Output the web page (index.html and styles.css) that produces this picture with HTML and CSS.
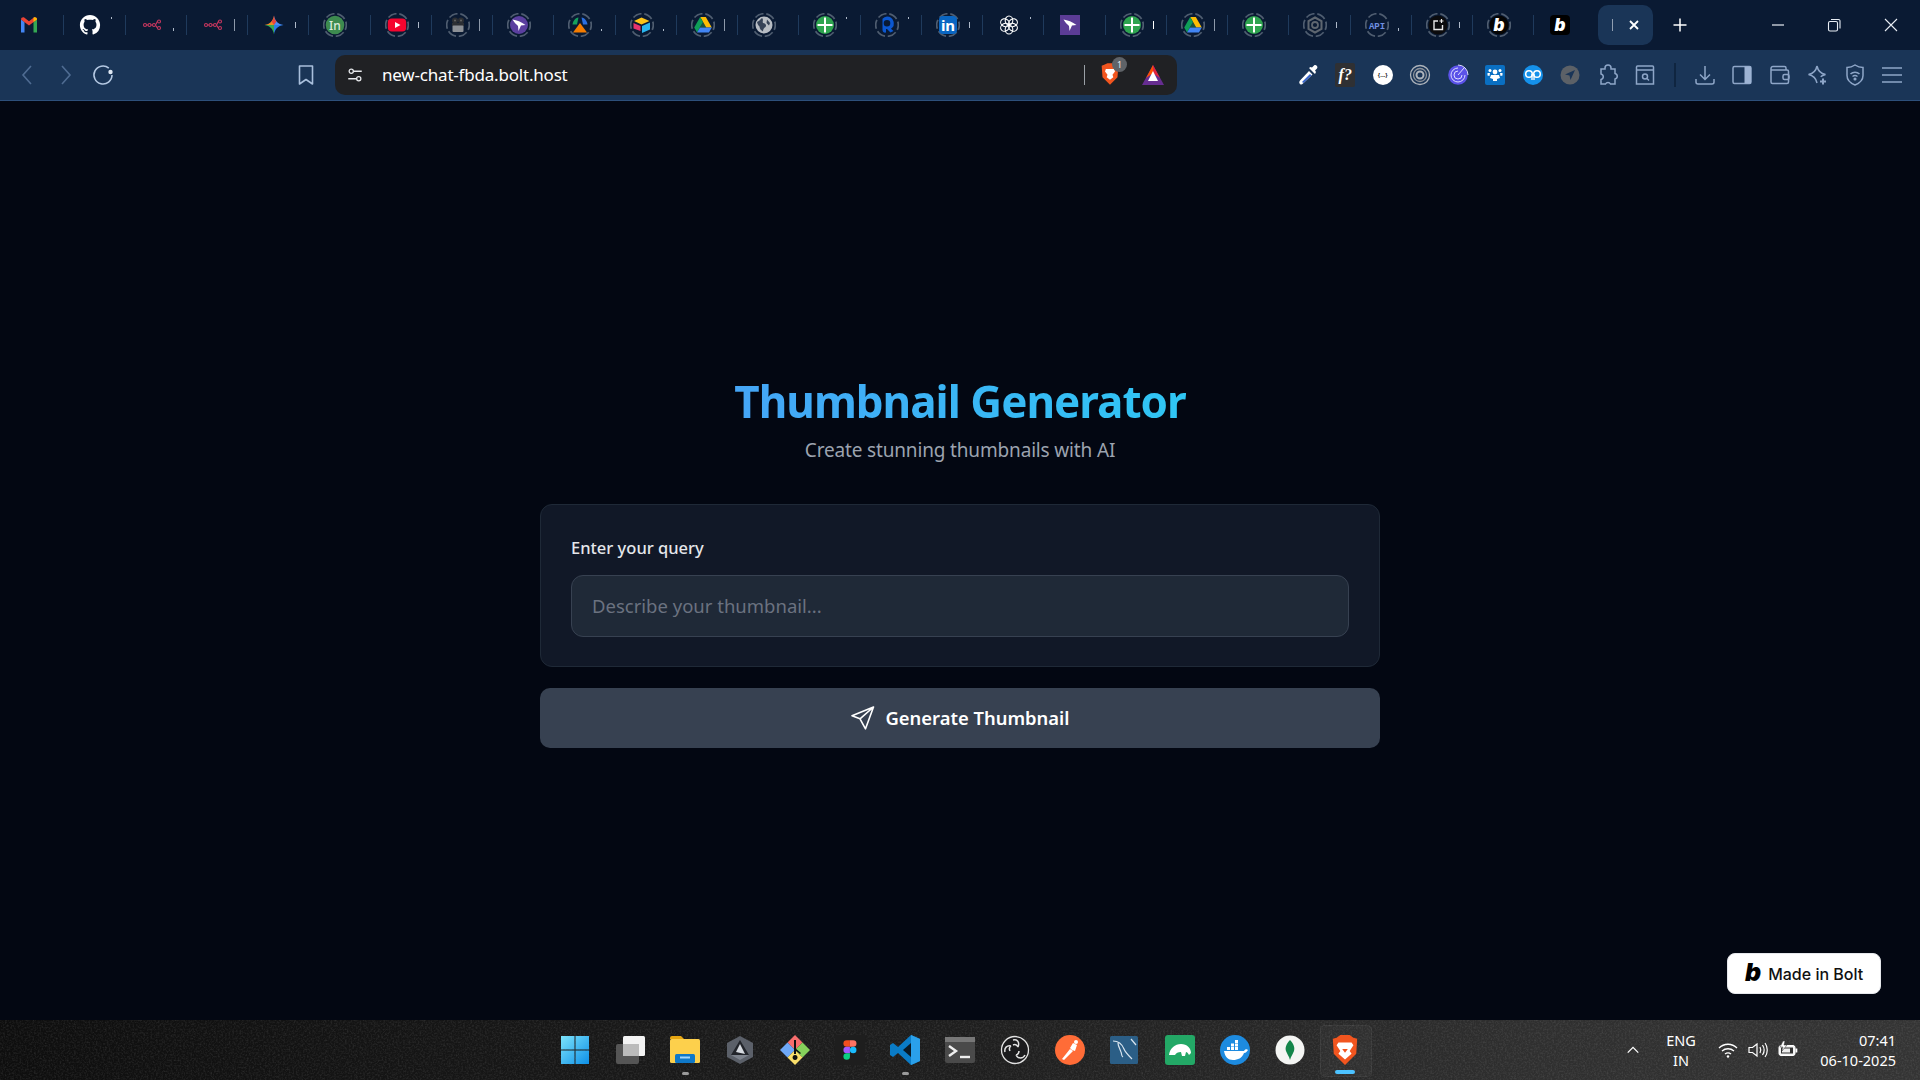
FILE: index.html
```html
<!DOCTYPE html>
<html lang="en">
<head>
<meta charset="utf-8">
<title>Thumbnail Generator</title>
<link rel="stylesheet" href="styles.css">
</head>
<body>
<svg class="sprite" width="0" height="0" aria-hidden="true">
  <defs>
    <symbol id="ring" viewBox="0 0 24 24"><circle cx="12" cy="12" r="11.300" fill="none" stroke="#4f5d70" stroke-width="1.700" stroke-dasharray="9 2.850" stroke-dashoffset="4"/></symbol>
    <symbol id="flow" viewBox="0 0 24 24"><g fill="none" stroke="#c8375f" stroke-width="1.100"><circle cx="5" cy="12" r="1.500"/><circle cx="9.500" cy="12" r="1.500"/><circle cx="14" cy="12" r="1.500"/><circle cx="19" cy="8.500" r="1.500"/><circle cx="19" cy="15" r="1.500"/><path d="M6.500 12H8M11 12h1.500M15.500 11.500c1.500-.3.800-3 2-3M15.500 12.500c1.500.3.800 2.500 2 2.500"/></g></symbol>
    <symbol id="plus" viewBox="0 0 24 24"><circle cx="12" cy="12" r="9" fill="#2ea44f"/><path d="M12 4.500v15M4.500 12h15" stroke="#fff" stroke-width="2"/></symbol>
    <symbol id="drive" viewBox="0 0 24 24"><path d="M9.200 4h5.600l6 10.500h-5.600z" fill="#fbbc04"/><path d="M9.200 4 3.200 14.500 6 19.500 12 9z" fill="#0f9d58"/><path d="M6 19.500h12l2.800-5H9z" fill="#4285f4"/><path d="m9 14.500 3-5.500 3.200 5.500z" fill="#34a853" opacity=".4"/></symbol>
    <symbol id="bird" viewBox="0 0 24 24"><path d="M5.500 6.500c4 .5 9 2.500 13 5.500l-4.500.5-2.500 5.500-.5-5c-2-2-3.700-3.500-5.500-6.500z" fill="#fff"/></symbol>
    <symbol id="boltb" viewBox="0 0 24 24"><text x="12" y="18" text-anchor="middle" class="svg-b">b</text></symbol>
  </defs>
</svg>

<header class="tabstrip">
  <div class="tab first"><svg class="fav" viewBox="0 0 24 24"><path d="M4 19.500V6.500l3.500 2.600v10.400z" fill="#4285f4"/><path d="M16.500 19.500V9.100L20 6.500v13z" fill="#34a853"/><path d="M4 6.500c0-1.900 2.100-2.800 3.500-1.700L12 8.200l4.500-3.400C17.900 3.700 20 4.600 20 6.500l-8 6z" fill="#ea4335"/><path d="M16.500 9.100 20 6.500c0-1.900-2.100-2.800-3.500-1.700z" fill="#fbbc04"/></svg></div>
  <div class="tab"><svg class="fav" viewBox="-1.500 -1.500 19 19"><path fill="#fff" d="M8 0C3.580 0 0 3.580 0 8c0 3.540 2.290 6.530 5.470 7.590.4.070.55-.17.55-.38 0-.19-.01-.82-.01-1.490-2.010.37-2.530-.49-2.690-.94-.09-.23-.48-.94-.82-1.130-.28-.15-.68-.52-.01-.53.63-.01 1.080.58 1.230.82.72 1.210 1.870.87 2.330.66.07-.52.28-.87.51-1.070-1.780-.2-3.640-.89-3.640-3.950 0-.87.31-1.590.82-2.150-.08-.2-.36-1.020.08-2.120 0 0 .67-.21 2.200.82.64-.18 1.320-.27 2-.27.68 0 1.360.09 2 .27 1.530-1.040 2.200-.82 2.200-.82.44 1.100.16 1.920.08 2.120.51.56.82 1.270.82 2.150 0 3.070-1.870 3.750-3.650 3.950.29.25.54.73.54 1.480 0 1.070-.01 1.930-.01 2.200 0 .21.15.46.55.38A8.013 8.013 0 0016 8c0-4.420-3.580-8-8-8z"/></svg><i class="tick top"></i></div>
  <div class="tab"><svg class="fav"><use href="#flow"/></svg><i class="tick low"></i></div>
  <div class="tab"><svg class="fav"><use href="#flow"/></svg><i class="tick long"></i></div>
  <div class="tab"><svg class="fav" viewBox="0 0 24 24"><path d="M12 2.500 C12.800 7.800 16 11.200 21.500 12 H12z" fill="#4a8df6"/><path d="M12 2.500 C11.200 7.800 8 11.200 2.500 12 H12z" fill="#f08a24"/><path d="M2.500 12 C8 12.800 11.200 16.200 12 21.500 V12z" fill="#37a852"/><path d="M21.500 12 C16 12.800 12.800 16.200 12 21.500 V12z" fill="#2b7de9"/><path d="M12 2.500 C11.800 5 11 7 9.500 8.500 L12 12 14.500 8.500 C13 7 12.200 5 12 2.500z" fill="#e8453c"/></svg><i class="tick mid"></i></div>
  <div class="tab"><svg class="fav" viewBox="0 0 24 24"><use href="#ring" width="24" height="24"/><circle cx="12" cy="12" r="9.300" fill="#3d8b4f"/><text x="12" y="16.500" text-anchor="middle" class="svg-in">In</text></svg></div>
  <div class="tab"><svg class="fav" viewBox="0 0 24 24"><use href="#ring" width="24" height="24"/><rect x="2.800" y="5.500" width="18.400" height="13" rx="4" fill="#f5052f"/><path d="m10 9 5.500 3-5.500 3z" fill="#fff"/></svg><i class="tick mid"></i></div>
  <div class="tab"><svg class="fav" viewBox="0 0 24 24"><use href="#ring" width="24" height="24"/><g fill="#2c2f34"><circle cx="9" cy="7.500" r="3"/><circle cx="15" cy="7.500" r="3"/><rect x="6" y="10" width="12" height="3"/></g><rect x="6.500" y="12.500" width="11" height="6.500" rx="1" fill="#8c9096"/><circle cx="9" cy="7.500" r="1" fill="#666"/><circle cx="15" cy="7.500" r="1" fill="#666"/></svg><i class="tick long"></i></div>
  <div class="tab"><svg class="fav" viewBox="0 0 24 24"><use href="#ring" width="24" height="24"/><circle cx="12" cy="12" r="9" fill="#5b3f9f"/><use href="#bird" width="24" height="24"/></svg></div>
  <div class="tab"><svg class="fav" viewBox="0 0 24 24"><use href="#ring" width="24" height="24"/><path d="M10.500 4.500C7 5 5 8 4.500 11.500H9z" fill="#16a05d"/><path d="M13.500 4.500c3.500.5 5.500 3.500 6 7H15z" fill="#2b6fe0"/><path d="M5 19.500 12 10l7 9.500z" fill="#f57c00"/></svg><i class="tick dot-low"></i></div>
  <div class="tab"><svg class="fav" viewBox="0 0 24 24"><use href="#ring" width="24" height="24"/><path d="M11.500 4.500 19.500 8l-8 3.500L4 8z" fill="#fcc419"/><path d="M3.500 10 10.500 13v5l-7-2.500z" fill="#e8336d"/><path d="M12 13l8-3.500v7L12 20z" fill="#29b6f0"/></svg><i class="tick dot-low"></i></div>
  <div class="tab"><svg class="fav" viewBox="0 0 24 24"><use href="#ring" width="24" height="24"/><use href="#drive" width="24" height="24"/></svg><i class="tick long"></i></div>
  <div class="tab"><svg class="fav" viewBox="0 0 24 24"><use href="#ring" width="24" height="24"/><circle cx="12" cy="12" r="8.500" fill="#b8bdc4"/><path d="M5 9c2-1 3-2 5-4 2 2 0 3 1 5 2 0 4 2 2.500 4-1.500 1-2.500 2-2.500 4.500-2-1-3.500-3-3.500-5-1-1-2-2.500-2.500-4.500zM15 6.500l3 3.500-1 2.500-2.500-2.500z" fill="#0a1a33" opacity=".75"/></svg></div>
  <div class="tab"><svg class="fav" viewBox="0 0 24 24"><use href="#ring" width="24" height="24"/><use href="#plus" width="24" height="24"/></svg><i class="tick top"></i></div>
  <div class="tab"><svg class="fav" viewBox="0 0 24 24"><use href="#ring" width="24" height="24"/><path d="M12 3.500a6.800 6.800 0 0 1 4 12.300l2.500 2.200-3 1.500-3.500-3.500h-1v3.500c-1.700.500-3.500-.5-3.500-2.500V5.800A7 7 0 0 1 12 3.500zm0 3.500a3.300 3.300 0 1 0 0 6.600A3.300 3.300 0 0 0 12 7z" fill="#0b57d0" fill-rule="evenodd"/></svg><i class="tick top"></i></div>
  <div class="tab"><svg class="fav" viewBox="0 0 24 24"><use href="#ring" width="24" height="24"/><rect x="3" y="3" width="18" height="18" rx="4" fill="#0a66c2"/><text x="12" y="17.500" text-anchor="middle" class="svg-li">in</text></svg><i class="tick mid"></i></div>
  <div class="tab"><svg class="fav" viewBox="0 0 24 24" fill="none" stroke="#fff" stroke-width="1.100"><ellipse cx="12" cy="7.500" rx="3.800" ry="4.500"/><ellipse cx="16" cy="9.800" rx="4.500" ry="3.800" transform="rotate(-30 16 9.800)"/><ellipse cx="16" cy="14.300" rx="4.500" ry="3.800" transform="rotate(30 16 14.300)"/><ellipse cx="12" cy="16.500" rx="3.800" ry="4.500"/><ellipse cx="8" cy="14.300" rx="4.500" ry="3.800" transform="rotate(-30 8 14.300)"/><ellipse cx="8" cy="9.800" rx="4.500" ry="3.800" transform="rotate(30 8 9.800)"/></svg><i class="tick top"></i></div>
  <div class="tab"><svg class="fav" viewBox="0 0 24 24"><rect x="2" y="2" width="20" height="20" fill="#5b3c96"/><use href="#bird" width="24" height="24"/></svg></div>
  <div class="tab"><svg class="fav" viewBox="0 0 24 24"><use href="#ring" width="24" height="24"/><use href="#plus" width="24" height="24"/></svg><i class="tick long bright"></i></div>
  <div class="tab"><svg class="fav" viewBox="0 0 24 24"><use href="#ring" width="24" height="24"/><use href="#drive" width="24" height="24"/></svg><i class="tick long"></i></div>
  <div class="tab"><svg class="fav" viewBox="0 0 24 24"><use href="#ring" width="24" height="24"/><use href="#plus" width="24" height="24"/></svg></div>
  <div class="tab"><svg class="fav" viewBox="0 0 24 24"><use href="#ring" width="24" height="24"/><path d="M12 4.500 18.500 8v8L12 19.500 5.500 16V8z" fill="none" stroke="#5e6670" stroke-width="2"/><circle cx="12" cy="12" r="3" fill="none" stroke="#5e6670" stroke-width="1.800"/></svg><i class="tick mid"></i></div>
  <div class="tab"><svg class="fav" viewBox="0 0 24 24"><use href="#ring" width="24" height="24"/><text x="12" y="15.500" text-anchor="middle" class="svg-api">API</text></svg><i class="tick low"></i></div>
  <div class="tab"><svg class="fav" viewBox="0 0 24 24"><use href="#ring" width="24" height="24"/><circle cx="12" cy="12" r="9.500" fill="#0b0b0d"/><path d="M12 8H8v8.500h8.500V12" fill="none" stroke="#e8e8e8" stroke-width="1.400"/><path d="M15.500 6v4M13.500 8h4" stroke="#e8e8e8" stroke-width="1.200"/></svg><i class="tick mid"></i></div>
  <div class="tab"><svg class="fav" viewBox="0 0 24 24"><use href="#ring" width="24" height="24"/><circle cx="12" cy="12" r="9.500" fill="#050505"/><use href="#boltb" width="24" height="24"/></svg></div>
  <div class="tab"><svg class="fav" viewBox="0 0 24 24"><rect x="2" y="2" width="20" height="20" rx="4" fill="#000"/><use href="#boltb" width="24" height="24"/></svg></div>
  <div class="tab-active">
    <i class="tick long"></i>
    <svg class="tab-x" viewBox="0 0 12 12"><path d="m2 2 8 8M10 2l-8 8" stroke="#fff" stroke-width="1.800"/></svg>
  </div>
  <svg class="new-tab" viewBox="0 0 16 16"><path d="M8 1.500v13M1.500 8h13" stroke="#fff" stroke-width="1.500"/></svg>
  <div class="win-controls">
    <div class="win-btn"><svg viewBox="0 0 16 16"><path d="M2 8h12" stroke="#e8edf4" stroke-width="1.200"/></svg></div>
    <div class="win-btn"><svg viewBox="0 0 16 16" fill="none" stroke="#e8edf4" stroke-width="1.100"><rect x="2.500" y="4.500" width="9" height="9.500" rx="1.500"/><path d="M5 2.500h7.500a1.500 1.500 0 0 1 1.500 1.500v7.500"/></svg></div>
    <div class="win-btn wide"><svg viewBox="0 0 16 16"><path d="m2 2 12 12M14 2 2 14" stroke="#e8edf4" stroke-width="1.100"/></svg></div>
  </div>
</header>

<nav class="toolbar">
  <div class="tool"><svg viewBox="0 0 24 24" fill="none" stroke="#4f6c92" stroke-width="1.600"><path d="m15 3-8 9 8 9"/></svg></div>
  <div class="tool"><svg viewBox="0 0 24 24" fill="none" stroke="#4f6c92" stroke-width="1.600"><path d="m9 3 8 9-8 9"/></svg></div>
  <div class="tool"><svg viewBox="0 0 24 24" fill="none" stroke="#b4c8e2" stroke-width="1.600"><path d="M21 12a9 9 0 1 1-3.200-6.900"/><circle cx="19.500" cy="9" r="2.200" fill="#dfe8f3" stroke="none"/></svg></div>
  <div class="tool bookmark"><svg viewBox="0 0 24 24" fill="none" stroke="#a9bfdc" stroke-width="1.600" stroke-linejoin="round"><path d="M5.500 3h13v18L12 16.500 5.500 21z"/></svg></div>
  <div class="address">
    <svg class="addr-tune" viewBox="0 0 24 24" fill="none" stroke="#e8eaed" stroke-width="1.700"><circle cx="7" cy="7" r="2.800"/><path d="M10 7h11M3 17h11"/><circle cx="17" cy="17" r="2.800"/></svg>
    <span class="url">new-chat-fbda.bolt.host</span>
    <i class="addr-sep"></i>
    <div class="shield">
      <svg viewBox="0 0 24 28"><path d="M5 3 9 1h6l4 2 3 1-1 14-9 9-9-9L2 4z" fill="#f1551f"/><path d="M7 8h10l1 3-3 4 1 3-4 3-4-3 1-3-3-4z" fill="#fff"/></svg>
      <span class="shield-badge">1</span>
    </div>
    <svg class="bat" viewBox="0 0 24 24"><path d="M12 2 1 22h22z" fill="#662d91"/><path d="M12 2 5 15l7-5z" fill="#ff5000"/><path d="m12 2 7 13-7-5z" fill="#e3243b"/><path d="m12 8 5 10H7z" fill="#fff"/></svg>
  </div>
  <div class="tool ext-first"><svg viewBox="0 0 24 24"><path d="M4 21c-1-1-1-2 0-3.500L13 8l3.500 3.500L7 20.500C6 21.500 5 22 4 21z" fill="#fff"/><path d="M6 19l8-8 1.500 1.500-8 7.500z" fill="#3563c9"/><path d="m13 5 6 6 1-2-1-1.500 2-2c.8-1 .3-2-.3-2.700s-1.700-1-2.700-.3l-2 2L14.500 4z" fill="#fff"/></svg></div>
  <div class="tool"><span class="fq">f?</span></div>
  <div class="tool"><span class="jsonb">{...}</span></div>
  <div class="tool"><svg viewBox="0 0 24 24" fill="none" stroke="#aeb4bb" stroke-width="1.300"><circle cx="12" cy="12" r="9.500"/><circle cx="12" cy="12" r="6.500" stroke="#8d939b"/><circle cx="12" cy="12" r="3.500" stroke-width="2"/></svg></div>
  <div class="tool"><svg viewBox="0 0 24 24"><circle cx="12" cy="12" r="9.800" fill="#5b52e8"/><g fill="none" stroke="#dcdcff" stroke-width="1"><path d="M12 5a7 7 0 1 0 7 7M12 8a4 4 0 1 0 4 4M12 2a10 10 0 0 1 10 10"/><path d="m12 12 6-7"/></g></svg></div>
  <div class="tool"><svg viewBox="0 0 24 24"><rect x="2" y="2" width="20" height="20" rx="2" fill="#0a6fc2"/><g fill="#fff"><circle cx="12" cy="9" r="2.400"/><circle cx="7" cy="7.500" r="1.500"/><circle cx="17" cy="7.500" r="1.500"/><path d="M8 12h8l1 3-3 1v2h-4v-2l-3-1zM4.500 10H7l-.5 3-2-.5zM17 10h2.500v2.500l-2 .5z"/></g></svg></div>
  <div class="tool"><svg viewBox="0 0 24 24"><circle cx="12" cy="12" r="10" fill="#1591ea"/><circle cx="8" cy="11" r="3.300" fill="none" stroke="#fff" stroke-width="1.500"/><circle cx="16" cy="11" r="3.300" fill="none" stroke="#fff" stroke-width="1.500"/><path d="M11 11v6M13 11v6" stroke="#fff" stroke-width="1.300"/></svg></div>
  <div class="tool"><svg viewBox="0 0 24 24"><circle cx="12" cy="12" r="9.500" fill="#5c6167"/><path d="m17 7-10 4.500 4.500 1 1 4.500z" fill="#1a3557"/></svg></div>
  <div class="tool"><svg viewBox="0 0 24 24" class="line"><path d="M9 5a3 3 0 0 1 6 0v1h4v4.500a2.800 2.800 0 0 1 0 5.500V21h-4.500a2.800 2.800 0 0 0-5 0H5v-4.500a2.800 2.800 0 0 0 0-5.500V6h4z"/></svg></div>
  <div class="tool"><svg viewBox="0 0 24 24" class="line"><path d="M4.500 3h15a1 1 0 0 1 1 1v17h-17V4a1 1 0 0 1 1-1zM3.500 7h17"/><circle cx="12" cy="13.500" r="2.500"/><path d="m14 15.500 2 2"/></svg></div>
  <i class="tool-sep"></i>
  <div class="tool"><svg viewBox="0 0 24 24" class="line"><path d="M12 3v13M7 11.500l5 5 5-5M3 16v3a2 2 0 0 0 2 2h14a2 2 0 0 0 2-2v-3"/></svg></div>
  <div class="tool"><svg viewBox="0 0 24 24" class="line"><rect x="3" y="3.500" width="18" height="17" rx="1.500"/><rect x="14.500" y="3.500" width="6.500" height="17" fill="#9db3d3" stroke="none"/></svg></div>
  <div class="tool"><svg viewBox="0 0 24 24" class="line"><path d="M18 7V5a1.500 1.500 0 0 0-1.500-1.500H5A2 2 0 0 0 3 5.500V19a1.500 1.500 0 0 0 1.500 1.500H19a1.500 1.500 0 0 0 1.500-1.500V8.500A1.500 1.500 0 0 0 19 7H3.500"/><rect x="15" y="11.500" width="6" height="5" rx="1.500"/></svg></div>
  <div class="tool"><svg viewBox="0 0 24 24" class="line"><path d="M12 3c1 5 3.500 7.500 8.500 8.500-2 .5-3.500 1-4.800 2.300M12 3c-1 5-3.500 7.500-8.500 8.500 5 1 7.500 3.500 8.500 8.500"/><path d="M18 15.500v6M15 18.500h6" stroke-width="2"/></svg></div>
  <div class="tool"><svg viewBox="0 0 24 24" class="line"><path d="M12 2c3 2 5 2.500 8 2.500v8c0 4-3 7.500-8 9.500-5-2-8-5.500-8-9.500v-8C7 4.500 9 4 12 2z"/><path d="M7.500 11c2.500-2.500 6.500-2.500 9 0M9.500 13.500c1.500-1.200 3.500-1.200 5 0"/><circle cx="12" cy="16" r=".8" fill="#8ea6c8"/></svg></div>
  <div class="tool"><svg viewBox="0 0 24 24" class="line"><path d="M2 5h20M2 12h20M2 19h20"/></svg></div>
</nav>

<main class="page">
  <section class="app">
    <h1 class="title"><span class="title-text">Thumbnail Generator</span></h1>
    <p class="subtitle">Create stunning thumbnails with AI</p>
    <form class="card">
      <label class="label" for="q">Enter your query</label>
      <input class="input" id="q" type="text" placeholder="Describe your thumbnail...">
    </form>
    <button class="generate" type="button">
      <svg viewBox="0 0 24 24" fill="none" stroke="#fff" stroke-width="1.600" stroke-linejoin="round"><path d="M22.500 1 1 9.800l8 3 5.500 10zM22.500 1 9 12.800"/></svg>
      <span>Generate Thumbnail</span>
    </button>
  </section>
  <a class="made" href="#"><span class="made-b">b</span><span>Made in Bolt</span></a>
</main>

<footer class="taskbar">
  <svg class="noise" aria-hidden="true"><filter id="grain"><feTurbulence type="fractalNoise" baseFrequency=".55" numOctaves="2" seed="4"/><feColorMatrix values="0 0 0 0 1 0 0 0 0 1 0 0 0 0 1 1.100 0 0 0 -.44"/></filter><rect width="100%" height="100%" filter="url(#grain)"/></svg>
  <div class="tb-spacer"></div>
  <div class="tb-apps">
    <div class="app-icon"><svg viewBox="0 0 30 30"><defs><linearGradient id="win" x1="0" y1="0" x2="1" y2="1"><stop offset="0" stop-color="#7ce3fb"/><stop offset="1" stop-color="#0e8fe6"/></linearGradient></defs><path d="M1 1h13.500v13.500H1zM15.500 1H29v13.500H15.500zM1 15.500h13.500V29H1zM15.500 15.500H29V29H15.500z" fill="url(#win)"/></svg></div>
    <div class="app-icon"><svg viewBox="0 0 30 30"><rect x="1" y="9" width="23" height="20" rx="2" fill="#555"/><rect x="8" y="1" width="22" height="20" rx="1.500" fill="#f3f3f3"/><rect x="8" y="9" width="16" height="12" fill="#bbb"/></svg></div>
    <div class="app-icon dot"><svg viewBox="0 0 30 30"><path d="M0 3a2 2 0 0 1 2-2h9l3 3h-14z" fill="#e6a612"/><rect y="4" width="30" height="24" rx="1.500" fill="#fdd04c"/><rect x="5" y="19" width="20" height="9" rx="1.500" fill="#0f78c8"/><rect x="10" y="21.500" width="10" height="2" fill="#9fd6ff"/></svg></div>
    <div class="app-icon"><svg viewBox="0 0 30 30"><path d="M15 1 28 8v14l-13 7L2 22V8z" fill="#5b6069"/><path d="M15 5 24 20H6z" fill="#22252b"/><path d="M15 9l5 10-9-2z" fill="#d6dae0"/><path d="M6 20h18l-9 5z" fill="#7d838d"/></svg></div>
    <div class="app-icon"><svg viewBox="0 0 30 30"><path d="m15 0 7.500 7.500-7.500 7.500-7.500-7.500z" fill="#f76d6d"/><path d="m7.500 7.500 7.500 7.500-7.500 7.500L0 15z" fill="#6ea8f7"/><path d="m22.500 7.500 7.500 7.500-7.500 7.500L15 15z" fill="#86d15b"/><path d="m15 15 7.500 7.500L15 30l-7.500-7.500z" fill="#fadf6b"/><path d="M14 5h2v14h-2zM15 13l6 5-1 1-5-4zM15 20a2.500 2.500 0 1 0 .1 0z" fill="#111"/></svg></div>
    <div class="app-icon"><svg viewBox="0 0 30 30"><rect width="30" height="30" fill="#1e1e1e"/><g transform="translate(5.200 5.200) scale(.65)"><path d="M10 0h5v10h-5a5 5 0 0 1 0-10z" fill="#f24e1e"/><path d="M15 0h5a5 5 0 0 1 0 10h-5z" fill="#ff7262"/><path d="M10 10h5v10h-5a5 5 0 0 1 0-10z" fill="#a259ff"/><circle cx="20" cy="15" r="5" fill="#1abcfe"/><path d="M10 20h5v5a5 5 0 1 1-5-5z" fill="#0acf83"/></g></svg></div>
    <div class="app-icon dot"><svg viewBox="0 0 30 30"><path d="M21 0 30 4v22l-9 4-13-12-5 4-3-2v-10l3-2 5 4z" fill="#0a7cc7"/><path d="M21 0 30 4v22l-9 4z" fill="#2aa0ea"/><path d="M21 8v14l-8-7z" fill="#0a0a0a" opacity=".85"/></svg></div>
    <div class="app-icon"><svg viewBox="0 0 30 30"><rect y="2" width="30" height="26" rx="2" fill="#4a4a4a"/><rect y="2" width="30" height="5" fill="#777"/><path d="m4 11 7 5-7 5" fill="none" stroke="#eee" stroke-width="2.400"/><path d="M15 22h10" stroke="#eee" stroke-width="2.400"/></svg></div>
    <div class="app-icon"><svg viewBox="0 0 30 30" fill="none" stroke="#e2e2e2"><circle cx="15" cy="15" r="13.500" stroke-width="1.300" fill="#1b1b1d"/><path d="M13 5c4-1 7 2 5 7M25 20c-2 4-7 4-9 0M5 17c-1-4 2-7 6-6M18 12c-1-2-3-3-5-2M16 20c1.500-.5 3-2 3-4M11 11c-1.500 1-2 3-1 5" stroke-width="1.500"/></svg></div>
    <div class="app-icon"><svg viewBox="0 0 30 30"><circle cx="15" cy="15" r="15" fill="#ff6c37"/><path d="M7 24 15 14l3 2-9 9zM15 13l3-5 4 2-2 6-3-1z" fill="#fff"/><circle cx="21" cy="7" r="2" fill="#fff"/></svg></div>
    <div class="app-icon"><svg viewBox="0 0 30 30"><rect width="28" height="28" y="1" rx="1.500" fill="#2b5e86"/><path d="M3 6c5 0 9 3 11 8 1 3 4 6 8 10M8 8c0 3 2 6 3 9 1 2 0 4 2 5M21 4l5 6" fill="none" stroke="#d9e5ef" stroke-width="1.200"/></svg></div>
    <div class="app-icon"><svg viewBox="0 0 30 30"><rect width="30" height="30" rx="3" fill="#23a866"/><path d="M4 20c1-7 6-11 12-11 6 0 10 4 10 9l-2 2c-1-2-2-3-3-3l-1 4h-3l-1-4c-3 0-5 1-6 3z" fill="#fff"/></svg></div>
    <div class="app-icon"><svg viewBox="0 0 30 30"><circle cx="15" cy="15" r="15" fill="#1d8be0"/><path d="M4 16h20c1-2 3-2 4-1-1 1-2 3-4 3-2 5-6 7-11 7-5 0-8-3-9-9z" fill="#fff"/><path d="M7 12h3v3H7zM11 12h3v3h-3zM15 12h3v3h-3zM11 8.500h3v3h-3zM15 8.500h3v3h-3zM15 5h3v3h-3z" fill="#fff"/></svg></div>
    <div class="app-icon"><svg viewBox="0 0 30 30"><circle cx="15" cy="15" r="14.500" fill="#f4f5f3"/><path d="M15 5c4 4 5 8 4 11s-3 5-4 9c-1-4-3-6-4-9s0-7 4-11z" fill="#13854a"/></svg></div>
    <div class="app-icon active"><svg viewBox="0 0 30 32"><path d="M6 3 10 0h10l4 3 4 1-1 16-12 12L3 20 2 4z" fill="#f1551f"/><path d="M8 8h14l2 3-4 6 2 3-7 6-7-6 2-3-4-6z" fill="#fff"/><path d="M12 15h6l-3 4z" fill="#f1551f"/></svg></div>
  </div>
  <div class="tray">
    <svg class="caret" viewBox="0 0 16 16" fill="none" stroke="#fff" stroke-width="1.500"><path d="m2 11 6-6 6 6"/></svg>
    <div class="lang"><span>ENG</span><span>IN</span></div>
    <div class="tray-icon"><svg viewBox="0 0 20 20" fill="none" stroke="#fff" stroke-width="1.300"><path d="M1 8c5-5 13-5 18 0M4 11c3.500-3 8.500-3 12 0M7 14c2-1.500 4-1.500 6 0"/><circle cx="10" cy="16.500" r="1.200" fill="#fff" stroke="none"/></svg></div>
    <div class="tray-icon"><svg viewBox="0 0 20 20" fill="none" stroke="#fff" stroke-width="1.200"><path d="M1 7.500h3.500L9 4v12l-4.500-3.500H1zM12 7c1 2 1 4 0 6M14.500 5c2 3 2 7 0 10M17 3c3 4 3 10 0 14"/></svg></div>
    <div class="tray-icon"><svg viewBox="0 0 20 20"><rect x="1" y="5.500" width="16" height="10" rx="2" fill="#f4f4f4" stroke="#fff"/><rect x="3" y="7.500" width="12" height="6" fill="#333"/><rect x="4" y="8.500" width="8" height="4" fill="#eee"/><rect x="17.500" y="8.500" width="1.800" height="4" fill="#fff"/><path d="M5 1 2 7h3l-1 4 5-6H6l1-4z" fill="#fff" stroke="#333" stroke-width=".5"/></svg></div>
    <div class="clock"><span>07:41</span><span>06-10-2025</span></div>
  </div>
</footer>
</body>
</html>
```

FILE: styles.css
```css
* { box-sizing: border-box; }
html, body { margin: 0; height: 100%; }
body {
  width: 1920px;
  height: 1080px;
  overflow: hidden;
  display: flex;
  flex-direction: column;
  background: #030712;
  font-family: "Noto Sans", "Open Sans", sans-serif;
  color: #fff;
}
.sprite { position: absolute; }

/* tab strip */
.tabstrip {
  height: 50px;
  flex: none;
  display: flex;
  align-items: center;
  padding-left: 2px;
  background: #0a1a33;
}
.tab {
  width: 61.25px;
  height: 20px;
  flex: none;
  display: flex;
  align-items: center;
  padding-left: 14px;
  border-left: 1px solid #1f3a5c;
}
.tab.first { border-left-color: transparent; }
.fav { width: 24px; height: 24px; flex: none; overflow: visible; }
.tick { display: block; width: 1px; margin-left: 9px; background: #aeb9c8; flex: none; }
.tick.top { height: 2px; margin-bottom: 14px; }
.tick.low { height: 3px; margin-top: 8px; }
.tick.dot-low { height: 2px; margin-top: 10px; }
.tick.mid { height: 6px; }
.tick.long { height: 12px; opacity: .8; }
.tick.bright { height: 8px; opacity: 1; background: #fff; }
.svg-in { font: 500 12px "Noto Sans", sans-serif; fill: #dcecdc; }
.svg-li { font: 700 15px "Noto Sans", sans-serif; fill: #fff; }
.svg-api { font: 700 9px "Liberation Mono", monospace; fill: #6f90e0; }
.svg-b { font: italic 900 17px Inter, sans-serif; fill: #fff; }

.tab-active {
  width: 55px;
  height: 40px;
  margin-left: 3px;
  flex: none;
  display: flex;
  align-items: center;
  padding-left: 14px;
  gap: 15px;
  border-radius: 10px;
  background: #1a3557;
}
.tab-active .tick { margin-left: 0; }
.tab-x { width: 12px; height: 12px; }
.new-tab { width: 16px; height: 16px; margin-left: 19px; flex: none; }
.win-controls { margin-left: auto; display: flex; }
.win-btn { width: 56px; height: 50px; display: flex; align-items: center; justify-content: center; }
.win-btn.wide { width: 58px; }
.win-btn svg { width: 16px; height: 16px; }

/* toolbar */
.toolbar {
  height: 51px;
  flex: none;
  display: flex;
  align-items: center;
  padding: 0 0 1px 9px;
  background: #1a3557;
  border-bottom: 1px solid #2d4f7a;
}
.tool { width: 37.5px; height: 40px; flex: none; display: flex; align-items: center; justify-content: center; }
.tool svg { width: 24px; height: 24px; overflow: visible; }
.tool .line { fill: none; stroke: #8ea6c8; stroke-width: 1.500; }
.bookmark { margin-left: 166px; }
.address {
  width: 842px;
  height: 40px;
  margin-left: 10px;
  flex: none;
  display: flex;
  align-items: center;
  padding-left: 11px;
  border-radius: 10px;
  background: #202124;
}
.addr-tune { width: 18px; height: 18px; flex: none; }
.url { margin-left: 18px; font-size: 17px; letter-spacing: -.2px; color: #fff; }
.addr-sep { display: block; width: 1px; height: 20px; margin-left: auto; background: #9aa0a6; flex: none; }
.shield { width: 22px; height: 26px; margin-left: 15px; position: relative; flex: none; }
.shield svg { display: block; width: 20px; height: 24px; }
.shield-badge {
  position: absolute;
  left: 12px;
  top: -5px;
  width: 15px;
  height: 15px;
  border-radius: 50%;
  background: #5f6368;
  font-size: 9px;
  line-height: 15px;
  text-align: center;
  color: #e8eaed;
}
.bat { width: 24px; height: 24px; margin-left: 19px; margin-right: 12px; flex: none; }
.ext-first { margin-left: 112px; }
.fq {
  width: 20px;
  height: 24px;
  border-radius: 2px;
  background: #2f3033;
  font: italic 700 16px/24px "Liberation Serif", serif;
  text-align: center;
  color: #fff;
}
.jsonb {
  width: 20px;
  height: 20px;
  border-radius: 50%;
  background: #fff;
  font: 700 6px/20px "Noto Sans", sans-serif;
  text-align: center;
  color: #222;
}
.tool-sep { display: block; width: 2px; height: 24px; margin: 0 10px; background: #0f2540; flex: none; }

/* page */
.page {
  flex: 1;
  position: relative;
  display: flex;
  align-items: center;
  justify-content: center;
  padding-bottom: 2px;
  background: #030712;
}
.app { width: 840px; }
.title {
  margin: 0 0 11px;
  padding-top: 5px;
  font-size: 44px;
  line-height: 48px;
  font-weight: 700;
  letter-spacing: -1px;
  text-align: center;
}
.title-text {
  background: linear-gradient(90deg, #45a5f6, #2fc6f4);
  -webkit-background-clip: text;
  background-clip: text;
  color: transparent;
}
.subtitle { margin: 0 0 40px; font-size: 19px; line-height: 28px; letter-spacing: -.16px; text-align: center; color: #9ca3af; }
.card {
  display: block;
  padding: 30px 30px 29px;
  border: 1px solid #1f2937;
  border-radius: 12px;
  background: #111827;
}
.label { display: block; margin-bottom: 14px; font-size: 16.500px; line-height: 26px; font-weight: 500; color: #e5e7eb; }
.input {
  display: block;
  width: 100%;
  height: 62px;
  padding: 0 20px;
  border: 1px solid #374151;
  border-radius: 12px;
  background: #1f2937;
  font: 400 18.500px "Noto Sans", sans-serif;
  color: #fff;
  outline: none;
}
.input::placeholder { color: #6b7280; opacity: 1; }
.generate {
  width: 100%;
  height: 60px;
  margin-top: 21px;
  display: flex;
  align-items: center;
  justify-content: center;
  gap: 11px;
  border: 0;
  border-radius: 10px;
  background: #374151;
  font: 600 18.400px "Noto Sans", sans-serif;
  color: #fff;
}
.generate svg { width: 24px; height: 24px; flex: none; }
.made {
  position: absolute;
  right: 39px;
  bottom: 26px;
  width: 154px;
  height: 41px;
  display: flex;
  align-items: center;
  gap: 7px;
  padding: 1px 0 0 17px;
  border: 1px solid #e5e7eb;
  border-radius: 8px;
  background: #fff;
  font: 500 16px Inter, sans-serif;
  color: #111;
  text-decoration: none;
}
.made-b { font: italic 900 25px/1 Inter, sans-serif; color: #000; margin-top: -3px; }

/* taskbar */
.taskbar {
  height: 60px;
  flex: none;
  position: relative;
  display: grid;
  grid-template-columns: 1fr auto 1fr;
  align-items: center;
  background: linear-gradient(90deg, #0e0e0e, #1e1e1e 50%, #2f2f2f 80%, #343434);
}
.noise { position: absolute; left: 0; top: 0; width: 100%; height: 100%; opacity: .18; }
.tb-apps { position: relative; display: flex; }
.app-icon {
  position: relative;
  width: 55px;
  height: 60px;
  display: flex;
  align-items: center;
  justify-content: center;
}
.app-icon svg { width: 30px; height: 30px; }
.app-icon.dot::after {
  content: "";
  position: absolute;
  left: 24px;
  bottom: 5px;
  width: 7px;
  height: 3px;
  border-radius: 2px;
  background: #9a9a9a;
}
.app-icon.active::before {
  content: "";
  position: absolute;
  left: 2.500px;
  top: 5px;
  width: 50px;
  height: 50px;
  border-radius: 5px;
  background: rgba(255, 255, 255, .03);
  border: 1px solid rgba(255, 255, 255, .05);
}
.app-icon.active svg { position: relative; }
.app-icon.active::after {
  content: "";
  position: absolute;
  left: 17.500px;
  bottom: 6px;
  width: 20px;
  height: 4px;
  border-radius: 2px;
  background: #4cc2ff;
}
.tray {
  position: relative;
  display: flex;
  align-items: center;
  justify-content: flex-end;
  padding-right: 24px;
  font-size: 14.500px;
  line-height: 20px;
}
.caret { width: 14px; height: 14px; margin-right: 9px; flex: none; }
.lang { width: 64px; display: flex; flex-direction: column; align-items: center; }
.tray-icon { width: 30px; height: 30px; display: flex; align-items: center; justify-content: center; }
.tray-icon svg { width: 20px; height: 20px; }
.clock { width: 93px; display: flex; flex-direction: column; align-items: flex-end; }
```
